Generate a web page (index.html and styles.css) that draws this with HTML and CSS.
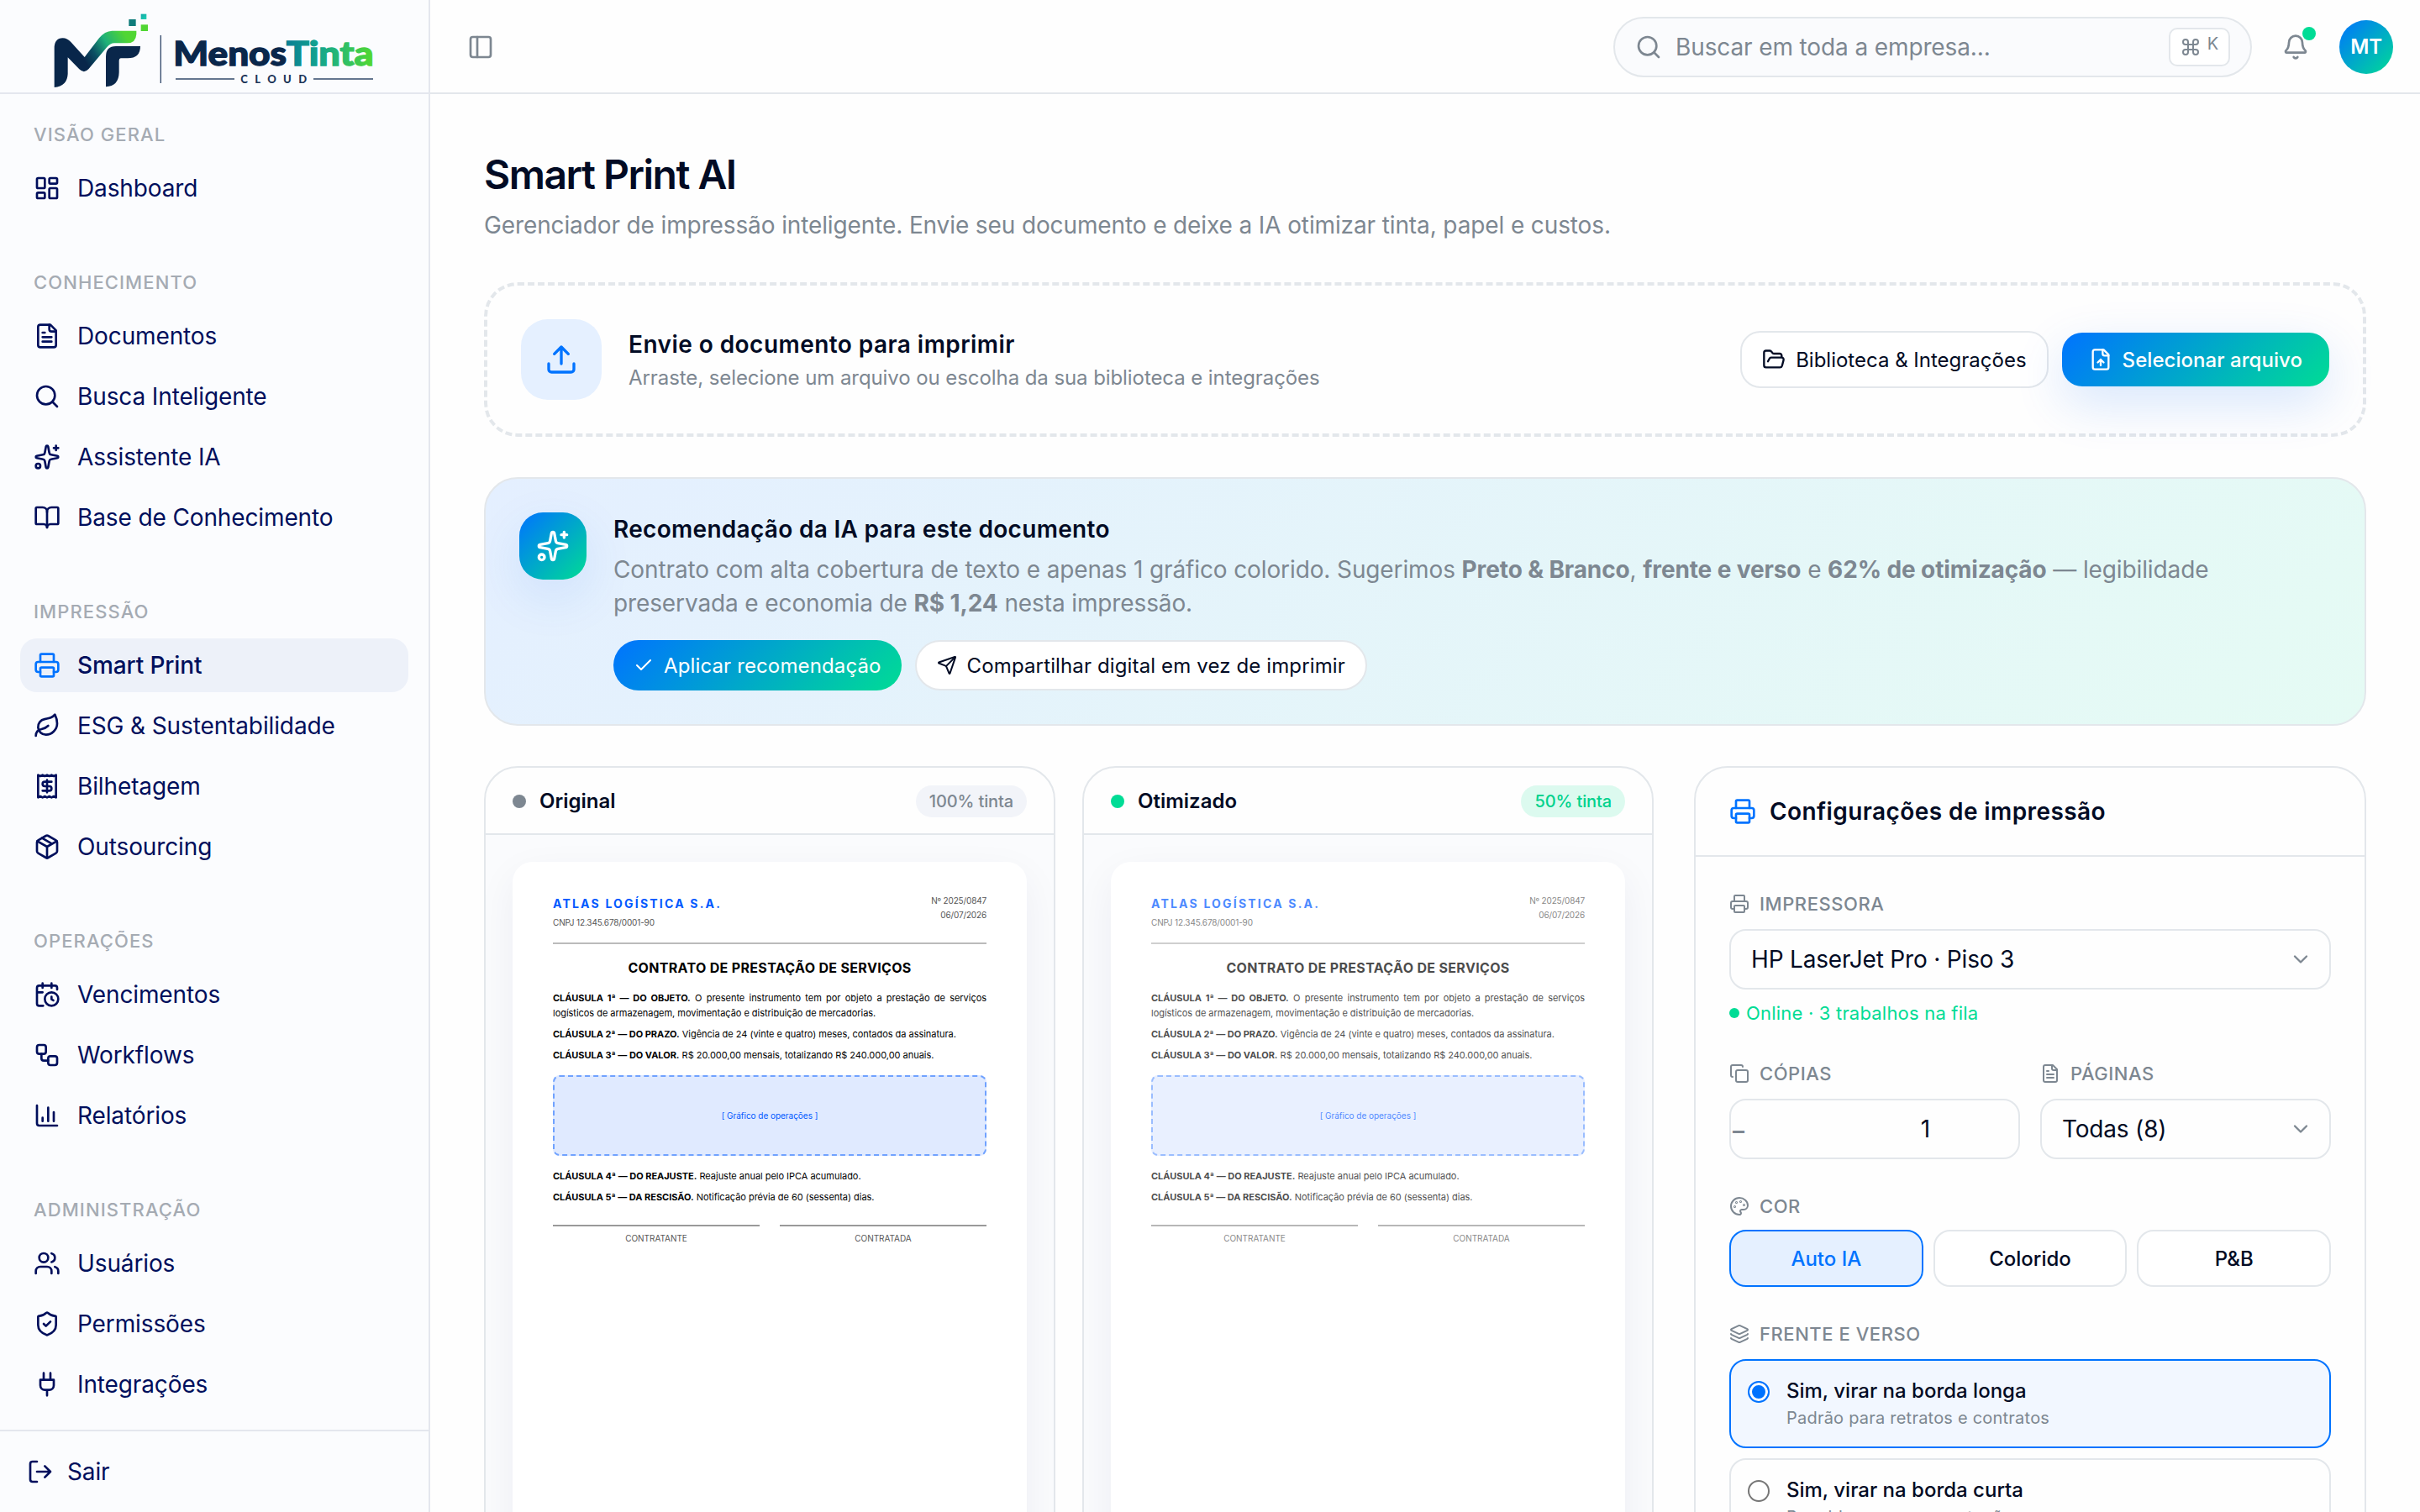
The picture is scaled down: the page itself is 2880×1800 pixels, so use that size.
FILE: index.html
```html
<!DOCTYPE html>
<html lang="pt-BR">
<head>
  <meta charset="UTF-8">
  <meta name="viewport" content="width=device-width, initial-scale=1.0">
  <title>Smart Print AI - MenosTinta Cloud</title>
  <link rel="stylesheet" href="styles.css">
</head>
<body>
  <!-- Icon sprite -->
  <svg class="sprite" width="0" height="0">
    <symbol id="i-dashboard" viewBox="0 0 24 24"><rect x="3" y="3" width="7" height="9" rx="1"/><rect x="14" y="3" width="7" height="5" rx="1"/><rect x="14" y="12" width="7" height="9" rx="1"/><rect x="3" y="16" width="7" height="5" rx="1"/></symbol>
    <symbol id="i-file" viewBox="0 0 24 24"><path d="M15 2H6a2 2 0 0 0-2 2v16a2 2 0 0 0 2 2h12a2 2 0 0 0 2-2V7Z"/><path d="M14 2v4a2 2 0 0 0 2 2h4M10 9H8M16 13H8M16 17H8"/></symbol>
    <symbol id="i-search" viewBox="0 0 24 24"><circle cx="11" cy="11" r="8"/><path d="m21 21-4.3-4.3"/></symbol>
    <symbol id="i-sparkles" viewBox="0 0 24 24"><path d="M11.017 2.814a1 1 0 0 1 1.966 0l1.051 5.558a2 2 0 0 0 1.594 1.594l5.558 1.051a1 1 0 0 1 0 1.966l-5.558 1.051a2 2 0 0 0-1.594 1.594l-1.051 5.558a1 1 0 0 1-1.966 0l-1.051-5.558a2 2 0 0 0-1.594-1.594l-5.558-1.051a1 1 0 0 1 0-1.966l5.558-1.051a2 2 0 0 0 1.594-1.594z"/><path d="M20 2v4M22 4h-4"/><circle cx="4" cy="20" r="2"/></symbol>
    <symbol id="i-book" viewBox="0 0 24 24"><path d="M12 7v14"/><path d="M3 18a1 1 0 0 1-1-1V4a1 1 0 0 1 1-1h5a4 4 0 0 1 4 4 4 4 0 0 1 4-4h5a1 1 0 0 1 1 1v13a1 1 0 0 1-1 1h-6a3 3 0 0 0-3 3 3 3 0 0 0-3-3z"/></symbol>
    <symbol id="i-printer" viewBox="0 0 24 24"><path d="M6 18H4a2 2 0 0 1-2-2v-5a2 2 0 0 1 2-2h16a2 2 0 0 1 2 2v5a2 2 0 0 1-2 2h-2"/><path d="M6 9V3a1 1 0 0 1 1-1h10a1 1 0 0 1 1 1v6"/><rect x="6" y="14" width="12" height="8" rx="1"/></symbol>
    <symbol id="i-leaf" viewBox="0 0 24 24"><path d="M11 20A7 7 0 0 1 9.8 6.1C15.5 5 17 4.48 19 2c1 2 2 4.18 2 8 0 5.5-4.78 10-10 10Z"/><path d="M2 21c0-3 1.85-5.36 5.08-6C9.5 14.52 12 13 13 12"/></symbol>
    <symbol id="i-receipt" viewBox="0 0 24 24"><path d="M4 2v20l2-1 2 1 2-1 2 1 2-1 2 1 2-1 2 1V2l-2 1-2-1-2 1-2-1-2 1-2-1-2 1Z"/><path d="M16 8h-6a2 2 0 1 0 0 4h4a2 2 0 1 1 0 4H8M12 17.5v-11"/></symbol>
    <symbol id="i-package" viewBox="0 0 24 24"><path d="M11 21.73a2 2 0 0 0 2 0l7-4A2 2 0 0 0 21 16V8a2 2 0 0 0-1-1.73l-7-4a2 2 0 0 0-2 0l-7 4A2 2 0 0 0 3 8v8a2 2 0 0 0 1 1.73z"/><path d="M12 22V12M3.29 7 12 12l8.71-5M7.5 4.27l9 5.15"/></symbol>
    <symbol id="i-calendar" viewBox="0 0 24 24"><path d="M16 14v2.2l1.6 1M16 2v4M21 7.5V6a2 2 0 0 0-2-2H5a2 2 0 0 0-2 2v14a2 2 0 0 0 2 2h3.5M3 10h5M8 2v4"/><circle cx="16" cy="16" r="6"/></symbol>
    <symbol id="i-workflow" viewBox="0 0 24 24"><rect x="3" y="3" width="8" height="8" rx="2"/><path d="M7 11v4a2 2 0 0 0 2 2h4"/><rect x="13" y="13" width="8" height="8" rx="2"/></symbol>
    <symbol id="i-chart" viewBox="0 0 24 24"><path d="M3 3v16a2 2 0 0 0 2 2h16M18 17V9M13 17V5M8 17v-3"/></symbol>
    <symbol id="i-users" viewBox="0 0 24 24"><path d="M16 21v-2a4 4 0 0 0-4-4H6a4 4 0 0 0-4 4v2M16 3.128a4 4 0 0 1 0 7.744M22 21v-2a4 4 0 0 0-3-3.87"/><circle cx="9" cy="7" r="4"/></symbol>
    <symbol id="i-shield" viewBox="0 0 24 24"><path d="M20 13c0 5-3.5 7.5-7.66 8.95a1 1 0 0 1-.67-.01C7.5 20.5 4 18 4 13V6a1 1 0 0 1 1-1c2 0 4.5-1.2 6.24-2.72a1.17 1.17 0 0 1 1.52 0C14.51 3.81 17 5 19 5a1 1 0 0 1 1 1z"/><path d="m9 12 2 2 4-4"/></symbol>
    <symbol id="i-plug" viewBox="0 0 24 24"><path d="M12 22v-5M9 8V2M15 8V2M18 8v5a4 4 0 0 1-4 4h-4a4 4 0 0 1-4-4V8Z"/></symbol>
    <symbol id="i-logout" viewBox="0 0 24 24"><path d="m16 17 5-5-5-5M21 12H9M9 21H5a2 2 0 0 1-2-2V5a2 2 0 0 1 2-2h4"/></symbol>
    <symbol id="i-panel" viewBox="0 0 24 24"><rect x="3" y="3" width="18" height="18" rx="2"/><path d="M9 3v18"/></symbol>
    <symbol id="i-command" viewBox="0 0 24 24"><path d="M15 6v12a3 3 0 1 0 3-3H6a3 3 0 1 0 3 3V6a3 3 0 1 0-3 3h12a3 3 0 1 0-3-3"/></symbol>
    <symbol id="i-bell" viewBox="0 0 24 24"><path d="M10.268 21a2 2 0 0 0 3.464 0M3.262 15.326A1 1 0 0 0 4 17h16a1 1 0 0 0 .74-1.673C19.41 13.956 18 12.499 18 8A6 6 0 0 0 6 8c0 4.499-1.411 5.956-2.738 7.326"/></symbol>
    <symbol id="i-upload" viewBox="0 0 24 24"><path d="M12 3v12M17 8l-5-5-5 5M21 15v4a2 2 0 0 1-2 2H5a2 2 0 0 1-2-2v-4"/></symbol>
    <symbol id="i-folder" viewBox="0 0 24 24"><path d="m6 14 1.5-2.9A2 2 0 0 1 9.24 10H20a2 2 0 0 1 1.94 2.5l-1.54 6a2 2 0 0 1-1.95 1.5H4a2 2 0 0 1-2-2V5a2 2 0 0 1 2-2h3.9a2 2 0 0 1 1.69.9l.81 1.2a2 2 0 0 0 1.67.9H18a2 2 0 0 1 2 2v2"/></symbol>
    <symbol id="i-fileup" viewBox="0 0 24 24"><path d="M15 2H6a2 2 0 0 0-2 2v16a2 2 0 0 0 2 2h12a2 2 0 0 0 2-2V7Z"/><path d="M14 2v4a2 2 0 0 0 2 2h4M12 12v6M15 15l-3-3-3 3"/></symbol>
    <symbol id="i-check" viewBox="0 0 24 24"><path d="M20 6 9 17l-5-5"/></symbol>
    <symbol id="i-send" viewBox="0 0 24 24"><path d="M14.536 21.686a.5.5 0 0 0 .937-.024l6.5-19a.496.496 0 0 0-.635-.635l-19 6.5a.5.5 0 0 0-.024.937l7.93 3.18a2 2 0 0 1 1.112 1.11z"/><path d="m21.854 2.147-10.94 10.939"/></symbol>
    <symbol id="i-copy" viewBox="0 0 24 24"><rect x="8" y="8" width="14" height="14" rx="2"/><path d="M4 16c-1.1 0-2-.9-2-2V4c0-1.1.9-2 2-2h10c1.1 0 2 .9 2 2"/></symbol>
    <symbol id="i-palette" viewBox="0 0 24 24"><path d="M12 22a1 1 0 0 1 0-20 10 9 0 0 1 10 9 5 5 0 0 1-5 5h-2.25a1.75 1.75 0 0 0-1.4 2.8l.3.4a1.75 1.75 0 0 1-1.4 2.8z"/><circle cx="13.5" cy="6.5" r=".5"/><circle cx="17.5" cy="10.5" r=".5"/><circle cx="6.5" cy="12.5" r=".5"/><circle cx="8.5" cy="7.5" r=".5"/></symbol>
    <symbol id="i-layers" viewBox="0 0 24 24"><path d="M12.83 2.18a2 2 0 0 0-1.66 0L2.6 6.08a1 1 0 0 0 0 1.83l8.58 3.91a2 2 0 0 0 1.66 0l8.58-3.9a1 1 0 0 0 0-1.83z"/><path d="M2 12a1 1 0 0 0 .58.91l8.6 3.91a2 2 0 0 0 1.65 0l8.58-3.9A1 1 0 0 0 22 12"/><path d="M2 17a1 1 0 0 0 .58.91l8.6 3.91a2 2 0 0 0 1.65 0l8.58-3.9A1 1 0 0 0 22 17"/></symbol>
    <symbol id="i-chevron" viewBox="0 0 24 24"><path d="m6 9 6 6 6-6"/></symbol>
  </svg>

  <div class="app">
    <!-- Sidebar -->
    <aside class="sidebar">
      <div class="brand">
        <svg class="logo" viewBox="0 0 1212 306">
          <defs>
            <linearGradient id="arm" gradientUnits="userSpaceOnUse" x1="150" y1="200" x2="320" y2="90">
              <stop offset="0" stop-color="#08264a"/>
              <stop offset=".22" stop-color="#0b4f63"/>
              <stop offset=".5" stop-color="#1eb07a"/>
              <stop offset=".85" stop-color="#50d633"/>
            </linearGradient>
            <linearGradient id="word" gradientUnits="userSpaceOnUse" x1="868" y1="0" x2="1176" y2="0">
              <stop offset="0" stop-color="#0a7f92"/>
              <stop offset=".35" stop-color="#12a28f"/>
              <stop offset=".6" stop-color="#27b973"/>
              <stop offset="1" stop-color="#52d92f"/>
            </linearGradient>
            <linearGradient id="pixel" x1="0" y1="0" x2="1" y2="1">
              <stop offset="0" stop-color="#12a7a6"/>
              <stop offset="1" stop-color="#1fd3b4"/>
            </linearGradient>
          </defs>
          <path fill="url(#arm)" d="M38 288V148Q38 113 68 112Q84 112 97 126L146 180L198 112Q218 87 244 86H331V98Q329 130 298 130H252Q238 130 226 144L160 223Q144 240 127 223L86 181V240Q84 284 38 288Z"/>
          <path fill="#0a274b" d="M222 286V178Q222 141 258 141H345Q345 184 300 184H275Q269 184 269 192V235Q268 284 222 286Z"/>
          <rect x="304" y="45" width="25" height="24" fill="#0f7c7b"/>
          <rect x="347" y="26" width="20" height="19" fill="url(#pixel)"/>
          <rect x="347" y="64" width="25" height="23" fill="#50d633"/>
          <path stroke="#33496b" stroke-width="4" d="M418 102V273M471 258H681M963 258H1176"/>
          <text class="logo-word" x="463" y="211" textLength="404" lengthAdjust="spacingAndGlyphs" fill="#0a274b" stroke="#0a274b">Menos</text>
          <text class="logo-word" x="866" y="211" textLength="312" lengthAdjust="spacingAndGlyphs" fill="url(#word)" stroke="url(#word)">Tinta</text>
          <text class="logo-sub" x="703" y="273" textLength="236" fill="#1c3558">CLOUD</text>
        </svg>
      </div>

      <nav class="nav">
        <div class="nav-group">
          <div class="nav-label">VISÃO GERAL</div>
          <a class="nav-item"><svg class="icon"><use href="#i-dashboard"/></svg>Dashboard</a>
        </div>
        <div class="nav-group">
          <div class="nav-label">CONHECIMENTO</div>
          <a class="nav-item"><svg class="icon"><use href="#i-file"/></svg>Documentos</a>
          <a class="nav-item"><svg class="icon"><use href="#i-search"/></svg>Busca Inteligente</a>
          <a class="nav-item"><svg class="icon"><use href="#i-sparkles"/></svg>Assistente IA</a>
          <a class="nav-item"><svg class="icon"><use href="#i-book"/></svg>Base de Conhecimento</a>
        </div>
        <div class="nav-group">
          <div class="nav-label">IMPRESSÃO</div>
          <a class="nav-item active"><svg class="icon"><use href="#i-printer"/></svg>Smart Print</a>
          <a class="nav-item"><svg class="icon"><use href="#i-leaf"/></svg>ESG &amp; Sustentabilidade</a>
          <a class="nav-item"><svg class="icon"><use href="#i-receipt"/></svg>Bilhetagem</a>
          <a class="nav-item"><svg class="icon"><use href="#i-package"/></svg>Outsourcing</a>
        </div>
        <div class="nav-group">
          <div class="nav-label">OPERAÇÕES</div>
          <a class="nav-item"><svg class="icon"><use href="#i-calendar"/></svg>Vencimentos</a>
          <a class="nav-item"><svg class="icon"><use href="#i-workflow"/></svg>Workflows</a>
          <a class="nav-item"><svg class="icon"><use href="#i-chart"/></svg>Relatórios</a>
        </div>
        <div class="nav-group">
          <div class="nav-label">ADMINISTRAÇÃO</div>
          <a class="nav-item"><svg class="icon"><use href="#i-users"/></svg>Usuários</a>
          <a class="nav-item"><svg class="icon"><use href="#i-shield"/></svg>Permissões</a>
          <a class="nav-item"><svg class="icon"><use href="#i-plug"/></svg>Integrações</a>
        </div>
      </nav>

      <a class="logout"><svg class="icon"><use href="#i-logout"/></svg>Sair</a>
    </aside>

    <div class="main">
      <!-- Topbar -->
      <header class="topbar">
        <svg class="icon toggle"><use href="#i-panel"/></svg>
        <div class="search">
          <svg class="icon"><use href="#i-search"/></svg>
          <span class="search-text">Buscar em toda a empresa...</span>
          <span class="kbd"><svg class="icon"><use href="#i-command"/></svg><span>K</span></span>
        </div>
        <div class="bell"><svg class="icon"><use href="#i-bell"/></svg><span class="bell-dot"></span></div>
        <div class="avatar">MT</div>
      </header>

      <main class="content">
        <h1>Smart Print AI</h1>
        <p class="subtitle">Gerenciador de impressão inteligente. Envie seu documento e deixe a IA otimizar tinta, papel e custos.</p>

        <!-- Upload -->
        <section class="upload">
          <div class="upload-icon"><svg class="icon"><use href="#i-upload"/></svg></div>
          <div class="upload-text">
            <h2>Envie o documento para imprimir</h2>
            <p>Arraste, selecione um arquivo ou escolha da sua biblioteca e integrações</p>
          </div>
          <button class="btn btn-outline"><svg class="icon"><use href="#i-folder"/></svg>Biblioteca &amp; Integrações</button>
          <button class="btn btn-primary"><svg class="icon"><use href="#i-fileup"/></svg>Selecionar arquivo</button>
        </section>

        <!-- AI recommendation -->
        <section class="advice">
          <div class="advice-icon"><svg class="icon"><use href="#i-sparkles"/></svg></div>
          <div class="advice-body">
            <h2>Recomendação da IA para este documento</h2>
            <p>Contrato com alta cobertura de texto e apenas 1 gráfico colorido. Sugerimos <strong>Preto &amp; Branco</strong>, <strong>frente e verso</strong> e <strong>62% de otimização</strong> — legibilidade preservada e economia de <strong>R$ 1,24</strong> nesta impressão.</p>
            <div class="advice-actions">
              <button class="pill pill-primary"><svg class="icon"><use href="#i-check"/></svg>Aplicar recomendação</button>
              <button class="pill pill-outline"><svg class="icon"><use href="#i-send"/></svg>Compartilhar digital em vez de imprimir</button>
            </div>
          </div>
        </section>

        <div class="workspace">
          <!-- Original -->
          <section class="preview">
            <div class="preview-head">
              <span class="dot"></span>
              <span class="preview-title">Original</span>
              <span class="badge">100% tinta</span>
            </div>
            <div class="preview-body">
              <div class="paper">
                <div class="doc">
                  <div class="doc-head">
                    <div>
                      <div class="doc-company">ATLAS LOGÍSTICA S.A.</div>
                      <div class="doc-cnpj">CNPJ 12.345.678/0001-90</div>
                    </div>
                    <div class="doc-meta">Nº 2025/0847<br>06/07/2026</div>
                  </div>
                  <div class="doc-title">CONTRATO DE PRESTAÇÃO DE SERVIÇOS</div>
                  <p><b>CLÁUSULA 1ª — DO OBJETO.</b> O presente instrumento tem por objeto a prestação de serviços logísticos de armazenagem, movimentação e distribuição de mercadorias.</p>
                  <p><b>CLÁUSULA 2ª — DO PRAZO.</b> Vigência de 24 (vinte e quatro) meses, contados da assinatura.</p>
                  <p><b>CLÁUSULA 3ª — DO VALOR.</b> R$ 20.000,00 mensais, totalizando R$ 240.000,00 anuais.</p>
                  <div class="doc-chart">[ Gráfico de operações ]</div>
                  <p><b>CLÁUSULA 4ª — DO REAJUSTE.</b> Reajuste anual pelo IPCA acumulado.</p>
                  <p><b>CLÁUSULA 5ª — DA RESCISÃO.</b> Notificação prévia de 60 (sessenta) dias.</p>
                  <div class="doc-sign"><span>CONTRATANTE</span><span>CONTRATADA</span></div>
                </div>
              </div>
            </div>
          </section>

          <!-- Otimizado -->
          <section class="preview optimized">
            <div class="preview-head">
              <span class="dot"></span>
              <span class="preview-title">Otimizado</span>
              <span class="badge">50% tinta</span>
            </div>
            <div class="preview-body">
              <div class="paper">
                <div class="doc">
                  <div class="doc-head">
                    <div>
                      <div class="doc-company">ATLAS LOGÍSTICA S.A.</div>
                      <div class="doc-cnpj">CNPJ 12.345.678/0001-90</div>
                    </div>
                    <div class="doc-meta">Nº 2025/0847<br>06/07/2026</div>
                  </div>
                  <div class="doc-title">CONTRATO DE PRESTAÇÃO DE SERVIÇOS</div>
                  <p><b>CLÁUSULA 1ª — DO OBJETO.</b> O presente instrumento tem por objeto a prestação de serviços logísticos de armazenagem, movimentação e distribuição de mercadorias.</p>
                  <p><b>CLÁUSULA 2ª — DO PRAZO.</b> Vigência de 24 (vinte e quatro) meses, contados da assinatura.</p>
                  <p><b>CLÁUSULA 3ª — DO VALOR.</b> R$ 20.000,00 mensais, totalizando R$ 240.000,00 anuais.</p>
                  <div class="doc-chart">[ Gráfico de operações ]</div>
                  <p><b>CLÁUSULA 4ª — DO REAJUSTE.</b> Reajuste anual pelo IPCA acumulado.</p>
                  <p><b>CLÁUSULA 5ª — DA RESCISÃO.</b> Notificação prévia de 60 (sessenta) dias.</p>
                  <div class="doc-sign"><span>CONTRATANTE</span><span>CONTRATADA</span></div>
                </div>
              </div>
            </div>
          </section>

          <!-- Settings -->
          <section class="settings">
            <div class="settings-head"><svg class="icon"><use href="#i-printer"/></svg>Configurações de impressão</div>
            <div class="settings-body">
              <div class="field">
                <div class="label"><svg class="icon"><use href="#i-printer"/></svg>IMPRESSORA</div>
                <div class="select">HP LaserJet Pro · Piso 3<svg class="icon"><use href="#i-chevron"/></svg></div>
                <div class="status"><span class="status-dot"></span>Online · 3 trabalhos na fila</div>
              </div>
              <div class="field-row">
                <div class="field">
                  <div class="label"><svg class="icon"><use href="#i-copy"/></svg>CÓPIAS</div>
                  <div class="stepper"><span class="minus">–</span><span class="value">1</span></div>
                </div>
                <div class="field">
                  <div class="label"><svg class="icon"><use href="#i-file"/></svg>PÁGINAS</div>
                  <div class="select">Todas (8)<svg class="icon"><use href="#i-chevron"/></svg></div>
                </div>
              </div>
              <div class="field">
                <div class="label label-tight"><svg class="icon"><use href="#i-palette"/></svg>COR</div>
                <div class="segments">
                  <button class="segment selected">Auto IA</button>
                  <button class="segment">Colorido</button>
                  <button class="segment">P&amp;B</button>
                </div>
              </div>
              <div class="field">
                <div class="label"><svg class="icon"><use href="#i-layers"/></svg>FRENTE E VERSO</div>
                <div class="option selected">
                  <span class="radio"></span>
                  <div><div class="option-title">Sim, virar na borda longa</div><div class="option-text">Padrão para retratos e contratos</div></div>
                </div>
                <div class="option">
                  <span class="radio"></span>
                  <div><div class="option-title">Sim, virar na borda curta</div><div class="option-text">Para blocos e apresentações</div></div>
                </div>
              </div>
            </div>
          </section>
        </div>
      </main>
    </div>
  </div>
</body>
</html>
```
FILE: styles.css
```css
* {
  box-sizing: border-box;
}

body {
  margin: 0;
  font-family: Inter, 'Liberation Sans', sans-serif;
  font-size: 28px;
  line-height: 40px;
  letter-spacing: -0.12px;
  color: #020b24;
  background-color: #fefefe;
  overflow: hidden;
}

h1, h2, p {
  margin: 0;
}

button {
  font-family: inherit;
  color: inherit;
  cursor: pointer;
}

.sprite {
  display: none;
}

.icon {
  width: 32px;
  height: 32px;
  flex-shrink: 0;
  fill: none;
  stroke: currentColor;
  stroke-width: 2;
  stroke-linecap: round;
  stroke-linejoin: round;
}

.app {
  display: flex;
  height: 1800px;
  overflow: hidden;
}

/* Sidebar */
.sidebar {
  width: 512px;
  flex-shrink: 0;
  display: flex;
  flex-direction: column;
  background-color: #fbfcfe;
  border-right: 2px solid #e4e7ee;
  color: #000f5c;
}

.brand {
  height: 112px;
  padding: 8px 0 0 52px;
  border-bottom: 2px solid #e4e7ee;
}

.logo {
  display: block;
  width: 404px;
  height: 102px;
}

.logo-word {
  font-family: Lato, sans-serif;
  font-weight: 900;
  font-size: 122px;
  stroke-width: 4px;
}

.logo-sub {
  font-family: Lato, sans-serif;
  font-weight: 900;
  font-size: 39px;
}

.nav {
  flex: 1;
  padding-top: 16px;
  overflow: hidden;
}

.nav-group {
  padding: 0 24px;
  margin-bottom: 48px;
}

.nav-label {
  height: 64px;
  padding-left: 16px;
  font-size: 22px;
  line-height: 64px;
  font-weight: 500;
  letter-spacing: 1.1px;
  color: #a5abb3;
}

.nav-item {
  display: flex;
  align-items: center;
  gap: 20px;
  height: 64px;
  padding: 0 16px;
  border-radius: 20px;
}

.nav-item + .nav-item {
  margin-top: 8px;
}

.nav-item.active {
  background-color: #edf1f9;
  font-weight: 500;
}

.nav-item.active .icon {
  color: #0073ff;
}

.logout {
  display: flex;
  align-items: center;
  gap: 16px;
  height: 98px;
  padding: 0 32px;
  border-top: 2px solid #e4e7ee;
}

/* Topbar */
.main {
  flex: 1;
  min-width: 0;
}

.topbar {
  display: flex;
  align-items: center;
  height: 112px;
  padding: 2px 32px 0 44px;
  border-bottom: 2px solid #e3e7eb;
  color: #7d8791;
}

.search {
  display: flex;
  align-items: center;
  width: 760px;
  height: 72px;
  margin-left: auto;
  padding: 0 24px;
  background-color: #fafbfd;
  border: 2px solid #e3e7eb;
  border-radius: 36px;
}

.search-text {
  flex: 1;
  margin-left: 16px;
}

.kbd {
  display: flex;
  align-items: center;
  gap: 8px;
  height: 46px;
  padding: 0 12px;
  border: 2px solid #e3e7eb;
  border-radius: 10px;
  background-color: #fff;
  font-size: 20px;
  line-height: 32px;
}

.kbd span {
  margin-bottom: 9px;
}

.kbd .icon {
  width: 24px;
  height: 24px;
}

.bell {
  position: relative;
  display: flex;
  align-items: center;
  justify-content: center;
  width: 64px;
  height: 64px;
  margin: 0 20px;
}

.bell-dot {
  position: absolute;
  top: 8px;
  right: 8px;
  width: 16px;
  height: 16px;
  border-radius: 50%;
  background-color: #00dc95;
}

.avatar {
  width: 64px;
  height: 64px;
  border-radius: 50%;
  background: linear-gradient(135deg, #0073ff, #00dc95);
  color: #fff;
  font-size: 24px;
  font-weight: 600;
  line-height: 64px;
  text-align: center;
}

/* Page */
.content {
  padding: 64px;
}

h1 {
  font-size: 48px;
  line-height: 64px;
  font-weight: 600;
  letter-spacing: -1.5px;
}

.subtitle {
  margin-top: 8px;
  color: #7d8791;
}

/* Upload */
.upload {
  display: flex;
  align-items: center;
  height: 184px;
  margin-top: 48px;
  padding: 0 40px;
  border: 4px dashed #e3e7eb;
  border-radius: 40px;
}

.upload-icon {
  display: flex;
  align-items: center;
  justify-content: center;
  width: 96px;
  height: 96px;
  border-radius: 32px;
  background-color: #e5f0ff;
  color: #0073ff;
}

.upload-icon .icon {
  width: 40px;
  height: 40px;
}

.upload-text {
  flex: 1;
  margin-left: 32px;
}

.upload-text h2,
.advice h2 {
  font-size: 28px;
  line-height: 40px;
  font-weight: 600;
  letter-spacing: 0.45px;
}

.advice h2 {
  letter-spacing: 0.3px;
}

.upload-text p {
  color: #7d8791;
  font-size: 24px;
  line-height: 32px;
  letter-spacing: -0.08px;
  margin-top: 4px;
}

.btn {
  display: flex;
  align-items: center;
  gap: 12px;
  height: 64px;
  padding: 0 32px;
  border: none;
  border-radius: 24px;
  font-size: 24px;
}

.btn .icon {
  width: 28px;
  height: 28px;
}

.btn-outline {
  height: 68px;
  padding: 0 24px;
  background-color: #fff;
  border: 2px solid #e3e7eb;
}

.btn-primary {
  margin-left: 16px;
  background: linear-gradient(135deg, #0073ff, #00dc95);
  box-shadow: 0 20px 60px rgba(0, 102, 240, 0.16);
  color: #fff;
  font-weight: 500;
  letter-spacing: 0.05px;
}

/* AI recommendation */
.advice {
  display: flex;
  align-items: flex-start;
  height: 296px;
  margin-top: 48px;
  padding: 40px;
  border: 2px solid #e3e7eb;
  border-radius: 40px;
  background: linear-gradient(135deg, #e4efff, #e5fbf4);
}

.advice-icon {
  display: flex;
  align-items: center;
  justify-content: center;
  width: 80px;
  height: 80px;
  flex-shrink: 0;
  border-radius: 28px;
  background: linear-gradient(135deg, #0073ff, #00dc95);
  box-shadow: 0 20px 60px rgba(0, 102, 240, 0.1);
  color: #fff;
}

.advice-icon .icon {
  width: 40px;
  height: 40px;
}

.advice-body {
  margin-left: 32px;
}

.advice p {
  margin-top: 8px;
  color: #7d8791;
}

.advice strong {
  font-weight: 700;
}

.advice-actions {
  display: flex;
  gap: 16px;
  margin-top: 24px;
}

.pill {
  display: flex;
  align-items: center;
  gap: 12px;
  height: 60px;
  padding: 0 24px;
  border: none;
  border-radius: 30px;
  font-size: 24px;
  letter-spacing: 0.13px;
}

.pill .icon {
  width: 24px;
  height: 24px;
}

.pill-primary {
  background: linear-gradient(135deg, #0073ff, #00dc95);
  color: #fff;
}

.pill-outline {
  background-color: #fff;
  border: 2px solid #e3e7eb;
}

/* Previews */
.workspace {
  display: grid;
  grid-template-columns: 680px 680px 800px;
  column-gap: 32px;
  margin-top: 48px;
}

.preview,
.settings {
  border: 2px solid #e3e7eb;
  border-radius: 40px;
  background-color: #fefefe;
  overflow: hidden;
}

.settings {
  margin-left: 16px;
  margin-right: -16px;
}

.preview-head {
  display: flex;
  align-items: center;
  height: 80px;
  padding: 1px 32px 0;
  border-bottom: 2px solid #e3e7eb;
  font-size: 24px;
}

.dot {
  width: 16px;
  height: 16px;
  border-radius: 50%;
  background-color: #7d8791;
}

.preview-title {
  flex: 1;
  margin-left: 16px;
  font-weight: 600;
  letter-spacing: 0;
}

.badge {
  height: 38px;
  padding: 0 16px;
  border-radius: 19px;
  background-color: #f2f4f9;
  color: #7d8791;
  font-size: 20px;
  font-weight: 500;
  line-height: 38px;
}

.optimized .dot {
  background-color: #00dc95;
}

.optimized .badge {
  background-color: #dcfaef;
  color: #00d28d;
}

.preview-body {
  padding: 32px;
  background-color: #fafbfd;
}

.paper {
  height: 864px;
  padding: 36px 48px;
  border-radius: 24px;
  background-color: #fff;
  box-shadow: 0 16px 48px rgba(10, 30, 80, 0.06);
}

.doc {
  font-size: 11px;
  line-height: 18px;
  letter-spacing: -0.03px;
  color: #000;
}

.optimized .doc {
  opacity: 0.7;
}

.doc-head {
  display: flex;
  justify-content: space-between;
  height: 62px;
  border-bottom: 2px solid #bbb;
  color: #555;
  font-size: 10px;
}

.doc-company {
  color: #0059ff;
  font-size: 14px;
  line-height: 27px;
  font-weight: 700;
  letter-spacing: 2.2px;
}

.doc-cnpj {
  letter-spacing: -0.15px;
}

.doc-meta {
  text-align: right;
  line-height: 16.5px;
  letter-spacing: -0.15px;
  padding-top: 2px;
}

.doc-title {
  margin: 19px 0 18px;
  font-size: 16px;
  line-height: 18px;
  font-weight: 700;
  letter-spacing: 0.33px;
  text-align: center;
}

.doc p {
  margin-bottom: 7px;
  text-align: justify;
}

.doc-chart {
  height: 96px;
  margin: 15px 0 15px;
  border: 2px dashed #70a2ff;
  border-radius: 8px;
  background-color: #e0eaff;
  color: #0059ff;
  font-size: 10px;
  line-height: 92px;
  text-align: center;
}

.doc-sign {
  display: grid;
  grid-template-columns: 1fr 1fr;
  gap: 24px;
  margin-top: 24px;
  color: #555;
  font-size: 10px;
  line-height: 28px;
  text-align: center;
}

.doc-sign span {
  border-top: 2px solid #999;
}

/* Settings */
.settings-head {
  display: flex;
  align-items: center;
  gap: 16px;
  height: 106px;
  padding: 0 40px;
  border-bottom: 2px solid #e3e7eb;
  font-weight: 600;
  letter-spacing: 0.42px;
}

.settings-head .icon {
  color: #0073ff;
}

.settings-body {
  height: 852px;
  padding: 40px;
}

.field {
  margin-bottom: 40px;
}

.field-row {
  display: grid;
  grid-template-columns: 1fr 1fr;
  gap: 24px;
}

.label {
  display: flex;
  align-items: center;
  gap: 12px;
  height: 32px;
  margin-bottom: 14px;
  color: #7d8791;
  font-size: 22px;
  font-weight: 500;
  letter-spacing: 0.55px;
}

.label-tight {
  margin-bottom: 12px;
}

.label .icon {
  width: 24px;
  height: 24px;
}

.select,
.stepper {
  display: flex;
  align-items: center;
  height: 72px;
  padding: 0 20px 0 24px;
  border: 2px solid #e3e7eb;
  border-radius: 20px;
  letter-spacing: -0.18px;
}

.select .icon {
  width: 28px;
  height: 28px;
  margin-left: auto;
  color: #7d8791;
}

.status {
  display: flex;
  align-items: center;
  gap: 8px;
  height: 32px;
  margin-top: 12px;
  color: #00dc95;
  font-size: 22px;
  letter-spacing: 0.2px;
}

.status-dot {
  width: 12px;
  height: 12px;
  border-radius: 50%;
  background-color: #00dc95;
}

.stepper {
  padding: 0;
}

.minus {
  padding: 4px 0 0 2px;
  color: #7d8791;
  font-weight: 600;
}

.value {
  flex: 1;
  padding-left: 105px;
  text-align: center;
}

.segments {
  display: grid;
  grid-template-columns: repeat(3, 1fr);
  gap: 12px;
}

.segment {
  height: 68px;
  border: 2px solid #e3e7eb;
  border-radius: 20px;
  background-color: #fff;
  font-size: 24px;
  font-weight: 500;
}

.segment.selected {
  border-color: #0073ff;
  background-color: #e5f0ff;
  color: #0073ff;
}

.option {
  display: flex;
  gap: 20px;
  height: 106px;
  margin-bottom: 12px;
  padding: 19px 20px;
  border: 2px solid #e3e7eb;
  border-radius: 20px;
}

.option.selected {
  border-color: #0073ff;
  background-color: #f2f7ff;
}

.radio {
  width: 26px;
  height: 26px;
  margin-top: 5px;
  border: 2px solid #767676;
  border-radius: 50%;
}

.selected .radio {
  border-color: #0073ff;
  background-color: #0073ff;
  box-shadow: inset 0 0 0 3px #fff;
}

.option-title {
  font-size: 24px;
  line-height: 34px;
  font-weight: 500;
  letter-spacing: 0;
}

.option-text {
  color: #7d8791;
  font-size: 20px;
  line-height: 30px;
  letter-spacing: 0.22px;
}
```
